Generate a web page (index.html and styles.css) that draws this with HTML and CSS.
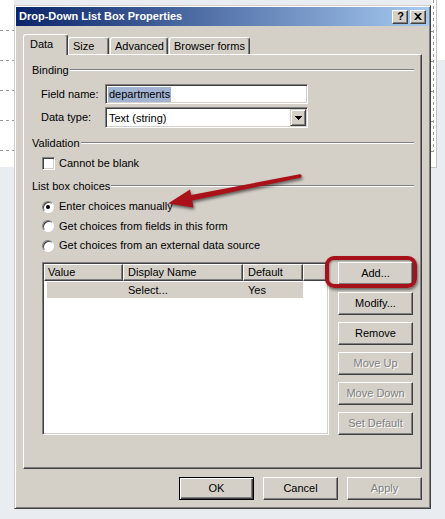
FILE: index.html
```html
<!DOCTYPE html>
<html>
<head>
<meta charset="utf-8">
<link rel="stylesheet" href="styles.css">
</head>
<body>
<div class="desktop">
  <div class="bg-left"><i></i><i></i><i></i><i></i><i></i></div>
  <div class="bg-right"><i></i><i></i><i></i><i></i><i></i></div>
  <div class="bg-far"></div>

  <div class="window">
    <div class="titlebar">
      <span class="title">Drop-Down List Box Properties</span>
      <div class="tb-btns">
        <span class="tb-btn help">?</span>
        <span class="tb-btn"><svg width="8" height="7" viewBox="0 0 8 7"><path d="M0 0h2l2 2 2-2h2L5 3.5 8 7H6L4 5 2 7H0l3-3.5z" fill="#000"/></svg></span>
      </div>
    </div>
    <div class="win-body">
      <div class="tabs">
        <div class="tab active t-data">Data</div>
        <div class="tab t-size">Size</div>
        <div class="tab t-adv">Advanced</div>
        <div class="tab t-browser">Browser forms</div>
      </div>
      <div class="panel">
        <div class="group-head">Binding</div>
        <div class="form-row first">
          <label>Field name:</label>
          <div class="textbox"><span class="sel">departments</span></div>
        </div>
        <div class="form-row second">
          <label>Data type:</label>
          <div class="combo">
            <span>Text (string)</span>
            <span class="drop-btn"><svg width="7" height="4" viewBox="0 0 7 4"><path d="M0 0h7v1H6v1H5v1H4v1H3V3H2V2H1V1H0z" fill="#000"/></svg></span>
          </div>
        </div>

        <div class="group-head validation">Validation</div>
        <div class="check-row">
          <span class="checkbox"></span>
          <span>Cannot be blank</span>
        </div>

        <div class="group-head listbox">List box choices</div>
        <div class="radio-list">
          <div class="radio-row"><span class="radio checked"></span><span>Enter choices manually</span></div>
          <div class="radio-row"><span class="radio"></span><span>Get choices from fields in this form</span></div>
          <div class="radio-row"><span class="radio"></span><span>Get choices from an external data source</span></div>
        </div>

        <div class="choices">
          <div class="listview">
            <div class="lv-head">
              <div class="hc c1">Value</div>
              <div class="hc c2">Display Name</div>
              <div class="hc c3">Default</div>
              <div class="hc c4"></div>
            </div>
            <div class="lv-row">
              <div class="rc r1"></div>
              <div class="rc r2">Select...</div>
              <div class="rc r3">Yes</div>
            </div>
          </div>
          <div class="side-btns">
            <div class="btn">Add...</div>
            <div class="btn">Modify...</div>
            <div class="btn">Remove</div>
            <div class="btn disabled">Move Up</div>
            <div class="btn disabled">Move Down</div>
            <div class="btn disabled">Set Default</div>
          </div>
        </div>
      </div>
      <div class="footer">
        <div class="btn default">OK</div>
        <div class="btn">Cancel</div>
        <div class="btn disabled">Apply</div>
      </div>
    </div>
  </div>

  <div class="highlight"></div>
  <svg class="annot" width="445" height="519" viewBox="0 0 445 519">
    <g class="arrow">
      <polygon points="299.7,174.3 300.3,177.7 191,200.8 189.8,195.2" fill="#ab1119"/>
      <circle cx="300" cy="176" r="1.7" fill="#ab1119"/>
      <polygon points="168,203.5 190,189.5 193.5,207.5" fill="#ab1119"/>
    </g>
  </svg>
</div>
</body>
</html>
```

FILE: styles.css
```css
* { box-sizing: border-box; }
html, body { margin: 0; padding: 0; }
body {
  width: 445px;
  height: 519px;
  overflow: hidden;
  font-family: "Liberation Sans", Arial, sans-serif;
  font-size: 11px;
  color: #000;
}
.desktop {
  position: relative;
  width: 445px;
  height: 519px;
  overflow: hidden;
  background: #e9ecf1;
}
.bg-left {
  position: absolute;
  left: 0; top: 0;
  width: 14px; height: 167px;
  background: #fff;
  display: flex;
  flex-direction: column;
  padding-top: 30px;
  gap: 29px;
}
.bg-left i {
  display: block;
  height: 1px;
  background: repeating-linear-gradient(to right, #9a9a9a 0 3px, transparent 3px 6px);
}
.bg-right {
  position: absolute;
  left: 431px; top: 0;
  width: 6px; height: 168px;
  background: #fff;
  border-right: 1px solid #c4c4c4;
  border-bottom: 1px solid #c4c4c4;
  display: flex;
  flex-direction: column;
  padding-top: 31px;
  gap: 29px;
}
.bg-right::before {
  content: "";
  position: absolute;
  left: 2px; top: 0;
  width: 1px; height: 152px;
  background: repeating-linear-gradient(to bottom, #9a9a9a 0 3px, transparent 3px 6px);
}
.bg-right i {
  display: block;
  width: 3px;
  height: 1px;
  background: #9a9a9a;
}
.bg-far {
  position: absolute;
  left: 437px; top: 0;
  width: 8px; height: 60px;
  background: #fff;
}

/* window */
.window {
  position: absolute;
  left: 14px; top: 5px;
  width: 417px; height: 504px;
  background: #d4d0c8;
  border: 1px solid;
  border-color: #d4d0c8 #404040 #404040 #d4d0c8;
  box-shadow: inset 1px 1px #fff, inset -1px -1px #808080;
  padding: 1px;
  display: flex;
  flex-direction: column;
}
.titlebar {
  height: 19px;
  flex: none;
  background: linear-gradient(to right, #0a246a, #a6caf0);
  display: flex;
  align-items: center;
  justify-content: space-between;
  padding: 0 3px;
  color: #fff;
  font-weight: bold;
}
.title { line-height: 13px; }
.tb-btns { display: flex; gap: 2px; }
.tb-btn {
  width: 16px; height: 14px;
  background: #d4d0c8;
  border: 1px solid;
  border-color: #fff #404040 #404040 #fff;
  box-shadow: inset -1px -1px #808080;
  display: flex;
  align-items: center;
  justify-content: center;
  color: #000;
  font-weight: bold;
  font-size: 11px;
  line-height: 11px;
}
.tb-btn svg { display: block; }
.tb-btn.help { padding-left: 1px; }

.win-body {
  flex: 1;
  display: flex;
  flex-direction: column;
  padding: 8px 7px 7px 7px;
}
.tabs {
  display: flex;
  align-items: flex-end;
  height: 20px;
  flex: none;
  position: relative;
  z-index: 1;
}
.tab {
  height: 17px;
  border-top: 1px solid #fff;
  border-left: 1px solid #fff;
  border-right: 1px solid #404040;
  box-shadow: inset -1px 0 #808080;
  border-radius: 3px 3px 0 0;
  padding-left: 4px;
  line-height: 16px;
  white-space: nowrap;
  background: #d4d0c8;
}
.tab.active {
  height: 21px;
  margin-bottom: -1px;
  padding-left: 6px;
  line-height: 19px;
}
.t-data { width: 45px; }
.t-size { width: 41px; }
.t-adv { width: 58px; margin-left: 1px; }
.t-browser { width: 81px; margin-left: 1px; }

.panel {
  flex: 1;
  border: 1px solid;
  border-color: #fff #404040 #404040 #fff;
  box-shadow: inset -1px -1px #808080;
  padding: 9px 7px 0 8px;
  display: flex;
  flex-direction: column;
}
.group-head {
  display: flex;
  align-items: center;
  height: 13px;
  line-height: 13px;
  white-space: nowrap;
}
.group-head::after {
  content: "";
  flex: 1;
  height: 0;
  border-top: 1px solid #808080;
  border-bottom: 1px solid #fff;
  margin-left: 1px;
  margin-top: -1px;
}
.group-head.validation { margin-top: 9px; }
.group-head.listbox { margin-top: 10px; }

.form-row {
  display: flex;
  align-items: center;
  margin-left: 9px;
}
.form-row.first { margin-top: 7px; }
.form-row.second { margin-top: 3px; }
.form-row label { width: 64px; line-height: 13px; }
.textbox, .combo {
  width: 203px;
  background: #fff;
  border: 1px solid;
  border-color: #808080 #fff #fff #808080;
  box-shadow: inset 1px 1px #404040, inset -1px -1px #d4d0c8;
}
.textbox {
  height: 20px;
  padding: 2px 0 0 2px;
}
.sel {
  display: inline-block;
  line-height: 15px;
  height: 15px;
  padding: 0 1px;
  background: #a3b3d2;
}
.combo {
  height: 21px;
  display: flex;
  align-items: center;
  justify-content: space-between;
  padding: 1px 1px 1px 3px;
}
.drop-btn {
  width: 16px; height: 17px;
  background: #d4d0c8;
  border: 1px solid;
  border-color: #d4d0c8 #404040 #404040 #d4d0c8;
  box-shadow: inset 1px 1px #fff, inset -1px -1px #808080;
  display: flex;
  align-items: center;
  justify-content: center;
}
.drop-btn svg { display: block; }

.check-row {
  display: flex;
  align-items: center;
  gap: 4px;
  margin: 7px 0 0 10px;
  height: 13px;
  line-height: 13px;
}
.checkbox {
  width: 13px; height: 13px;
  flex: none;
  background: #fff;
  border: 1px solid;
  border-color: #808080 #fff #fff #808080;
  box-shadow: inset 1px 1px #404040, inset -1px -1px #d4d0c8;
}
.radio-list {
  display: flex;
  flex-direction: column;
  gap: 6.5px;
  margin: 7px 0 0 10px;
}
.radio-row {
  display: flex;
  align-items: center;
  gap: 5px;
  height: 13px;
  line-height: 13px;
}
.radio {
  width: 12px; height: 12px;
  flex: none;
  border-radius: 50%;
  background: #fff;
  border: 1px solid;
  border-color: #808080 #fff #fff #808080;
  box-shadow: inset 1px 1px #404040;
  position: relative;
}
.radio.checked::after {
  content: "";
  position: absolute;
  left: 3px; top: 3px;
  width: 4px; height: 4px;
  border-radius: 50%;
  background: #000;
}

.choices {
  display: flex;
  gap: 9px;
  margin: 9.5px 0 0 10px;
}
.listview {
  width: 287px;
  height: 173px;
  background: #fff;
  border: 1px solid;
  border-color: #808080 #fff #fff #808080;
  box-shadow: inset 1px 1px #404040, inset -1px -1px #d4d0c8;
  padding: 1px;
}
.lv-head {
  display: flex;
  height: 17px;
}
.hc {
  height: 17px;
  background: #d4d0c8;
  border-top: 1px solid #fff;
  border-left: 1px solid #fff;
  border-right: 1px solid #404040;
  border-bottom: 1px solid #404040;
  box-shadow: inset -1px -1px #808080;
  padding-left: 4px;
  line-height: 14px;
  white-space: nowrap;
}
.hc.c1 { width: 79px; padding-left: 3px; }
.hc.c2 { width: 120px; }
.hc.c3 { width: 60px; }
.hc.c4 { flex: 1; }
.lv-row {
  display: flex;
  height: 16px;
  margin: 1px 0 0 3px;
  width: 256px;
  background: #d4d0c8;
  line-height: 16px;
}
.rc.r1 { width: 76px; }
.rc.r2 { width: 120px; padding-left: 5px; }
.rc.r3 { width: 60px; padding-left: 5px; }

.side-btns {
  display: flex;
  flex-direction: column;
  gap: 7px;
}
.btn {
  width: 75px;
  height: 23px;
  flex: none;
  background: #d4d0c8;
  border: 1px solid;
  border-color: #fff #404040 #404040 #fff;
  box-shadow: inset -1px -1px #808080;
  display: flex;
  align-items: center;
  justify-content: center;
  line-height: 13px;
  white-space: nowrap;
}
.btn.disabled {
  color: #808080;
  text-shadow: 1px 1px #fff;
}
.btn.default {
  border: 1px solid #000;
  box-shadow: inset 1px 1px #fff, inset -1px -1px #404040, inset -2px -2px #808080;
}
.footer {
  display: flex;
  justify-content: flex-end;
  gap: 9px;
  margin-top: 8px;
  flex: none;
}

/* annotations */
.highlight {
  position: absolute;
  left: 325px; top: 256px;
  width: 92px; height: 32px;
  border: 4px solid #a7121a;
  border-radius: 9px;
  box-shadow: 1px 2px 3px rgba(0,0,0,0.5), inset 1px 1px 2px rgba(0,0,0,0.35);
}
.annot {
  position: absolute;
  left: 0; top: 0;
  pointer-events: none;
}
.arrow {
  filter: drop-shadow(1px 2px 1.5px rgba(0,0,0,0.55));
}
```
